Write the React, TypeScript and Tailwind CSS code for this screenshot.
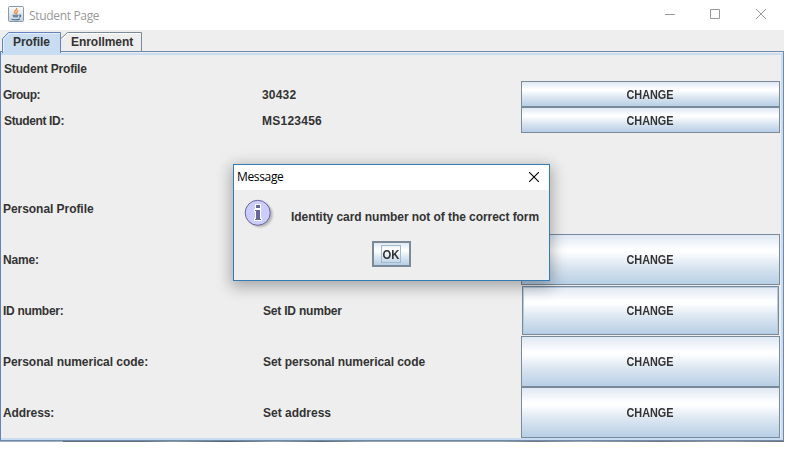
import type { ReactNode } from "react";

const labelFont = "font-['Liberation_Sans',Arial,sans-serif] text-[12px] font-bold leading-[14px] text-[#333333] whitespace-nowrap";
const face = "bg-[linear-gradient(180deg,#dfe8f3_0%,#ffffff_30%,#fdfeff_36%,#dbe6f1_64%,#b8cfe5_100%)]";

function JavaCup() {
  return (
    <svg width="16" height="16" viewBox="0 0 16 16" className="block">
      <defs>
        <linearGradient id="cupTile" x1="0" y1="0" x2="0" y2="1">
          <stop offset="0" stopColor="#fdfdfd" />
          <stop offset="1" stopColor="#c3d0dc" />
        </linearGradient>
      </defs>
      <rect x="0.5" y="0.5" width="15" height="15" rx="1" fill="url(#cupTile)" stroke="#8799ab" />
      <path d="M8.700 2C9.500 4 5.800 4.900 6.500 6.400c.3.600.9.900 1 1.500M10.300 4.300C8 5.200 9.700 6.600 8.400 8.200" fill="none" stroke="#ea8c42" strokeWidth="1.400" />
      <path d="M4.500 9.200h6M5 10.800h5M3.500 13.200c2.500.700 6.500.600 8.500-.2M11 9.200c2.200-.7 2.300 1.300.1 2" fill="none" stroke="#4a6b8b" strokeWidth="1.100" />
    </svg>
  );
}

function Row({ label, value, height, labelPad = "pl-[2px]", valuePad = "pl-px", tracking = "", valueTracking = "", focused = false }: {
  label: string; value?: string; height: string; labelPad?: string; valuePad?: string; tracking?: string; valueTracking?: string; focused?: boolean;
}) {
  const compact = height === "h-[26px]";
  return (
    <div className={`flex items-center ${height}`}>
      <div className={`w-[260px] ${compact ? "pt-[2px]" : ""} ${labelPad} ${tracking}`}>{label}</div>
      <div className={`w-[260px] ${compact ? "pt-[2px]" : ""} ${valuePad} ${valueTracking}`}>{value}</div>
      {value !== undefined && (
        <div className={`h-full w-[259px] ${focused ? "p-px" : ""}`}>
          <button className={`flex h-full w-full items-center justify-center border border-[#7a8a99] ${compact ? "pt-[2px]" : ""} ${face} ${focused ? "shadow-[inset_0_0_0_1px_#b4cbe1]" : ""}`}>
            <span className="scale-x-[0.905]">CHANGE</span>
          </button>
        </div>
      )}
    </div>
  );
}

function Tab({ children, active = false }: { children: ReactNode; active?: boolean }) {
  return active ? (
    <div className="relative z-10 h-[21px] w-[59px]">
      <svg width="59" height="21" className="absolute left-0 top-0">
        <path d="M.5 21V6.500L6.500.5h52V21" fill="#c8ddf2" stroke="#6382bf" />
        <path d="M1.500 20V7L7 1.500h51" fill="none" stroke="#e6f0fa" />
      </svg>
      <span className="absolute left-[11px] top-[3px] tracking-[-0.05px]">{children}</span>
    </div>
  ) : (
    <div className="relative h-[19px] w-[81px]">
      <svg width="81" height="19" className="absolute left-0 top-0">
        <path d="M0 6.500L6.500.5h74V19" fill="none" stroke="#7a8a99" />
        <path d="M1 7.500L7 1.500h72" fill="none" stroke="#fff" />
      </svg>
      <span className="absolute left-[10px] top-[3px] tracking-[-0.05px]">{children}</span>
    </div>
  );
}

function MessageDialog() {
  return (
    <div className="absolute left-[233px] top-[164px] z-20 flex h-[117px] w-[317px] flex-col border border-[#357bb1] bg-[#eee] shadow-[0_4px_14px_2px_rgba(0,0,0,0.3)]">
      <div className="flex h-[25px] items-center justify-between bg-white pl-[3px] pr-[10px] font-['Open_Sans','Noto_Sans',sans-serif] text-[12px] font-normal text-black">
        <span className="-mt-px leading-[24px] tracking-[-0.35px]">Message</span>
        <svg width="10" height="10" viewBox="0 0 10 10" className="-mt-px"><path d="M0 0l10 10M10 0L0 10" stroke="#000" strokeWidth="1.100" /></svg>
      </div>
      <div className="flex h-[51px] pl-[10px] pt-[8px]">
        <svg width="32" height="32" viewBox="0 0 32 32" className="shrink-0">
          <defs><filter id="discShade"><feGaussianBlur stdDeviation="1.300" /></filter></defs>
          <circle cx="16" cy="16.500" r="12.500" fill="#999" opacity=".7" filter="url(#discShade)" />
          <circle cx="13.700" cy="14.800" r="12.500" fill="#ccccff" stroke="#666699" />
          <path d="M12 7h4v3h-4zM11 12h5v9h1v1h-6v-1h1v-8h-1z" fill="#666699" stroke="#fff" strokeWidth="2" paintOrder="stroke" />
        </svg>
        <span className="ml-[15px] mt-[12px] tracking-[-0.06px]">Identity card number not of the correct form</span>
      </div>
      <div className="flex justify-center pr-[1px]">
        <button className={`flex h-[26px] w-[39px] items-center justify-center border-2 border-[#7a8a99] ${face}`}>
          <span className="flex h-[18px] w-[20px] items-center justify-center border border-[#a3b8cc] pt-[2px]"><span className="scale-x-[0.94]">OK</span></span>
        </button>
      </div>
    </div>
  );
}

export default function App() {
  return (
    <div className={`relative h-[452px] w-[796px] overflow-hidden bg-white ${labelFont}`}>
      <div className="flex h-[442px] w-[784px] flex-col bg-[#eee]">
        <header className="flex h-[30px] items-center bg-white pl-[8px] pr-[18px] font-['Open_Sans','Noto_Sans',sans-serif] font-normal text-[#999]">
          <div className="-mt-[2px]"><JavaCup /></div>
          <span className="ml-[5px] mt-px text-[12px] tracking-[-0.33px]">Student Page</span>
          <svg width="102" height="12" viewBox="0 0 102 12" className="-mt-[2px] ml-auto" fill="none" stroke="#999">
            <path d="M1 6.500h10M46.500 1.500h9v9h-9zM92 1l10 10M102 1l-10 10" />
          </svg>
        </header>
        <nav className="flex h-[21px] items-start pl-[2px] pt-[2px]">
          <Tab active>Profile</Tab>
          <Tab>Enrollment</Tab>
        </nav>
        <main className="flex h-[390px] flex-col border border-[#6f8aad] border-l-[#6382bf] pt-px">
          <div className="flex-1 border-b-2 border-r-2 border-t-2 border-[#c8ddf2]">
            <section>
              <Row label="Student Profile" height="h-[26px]" labelPad="pl-[3px]" tracking="tracking-[-0.17px]" />
              <Row label="Group:" value="30432" height="h-[26px]" tracking="tracking-[-0.5px]" valueTracking="tracking-[0.2px]" />
              <Row label="Student ID:" value="MS123456" height="h-[26px]" labelPad="pl-[3px]" tracking="tracking-[-0.36px]" valueTracking="tracking-[0.25px]" />
            </section>
            <section className="pt-[50px]">
              <Row label="Personal Profile" height="h-[51px]" tracking="tracking-[-0.05px]" />
              <Row label="Name:" value="" height="h-[51px]" tracking="tracking-[-0.2px]" />
              <Row label="ID number:" value="Set ID number" height="h-[51px]" valuePad="pl-[2px]" tracking="tracking-[-0.3px]" valueTracking="tracking-[-0.2px]" focused />
              <Row label="Personal numerical code:" value="Set personal numerical code" height="h-[51px]" valuePad="pl-[2px]" tracking="tracking-[-0.04px]" valueTracking="tracking-[-0.05px]" />
              <Row label="Address:" value="Set address" height="h-[51px]" valuePad="pl-[2px]" tracking="tracking-[-0.1px]" />
            </section>
          </div>
        </main>
        <div className="h-px bg-[linear-gradient(90deg,#a5abb2_0_8%,#686b70_8%_18%,#92999e_22%,#555b62_29%,#989ea5_35%,#62686e_41%,#9ba1a7_47%_64%,#717578_68%,#a1a4a7_74%,#737679_84%,#999_92%,#6b6e72_100%)]" />
      </div>
      <MessageDialog />
    </div>
  );
}
